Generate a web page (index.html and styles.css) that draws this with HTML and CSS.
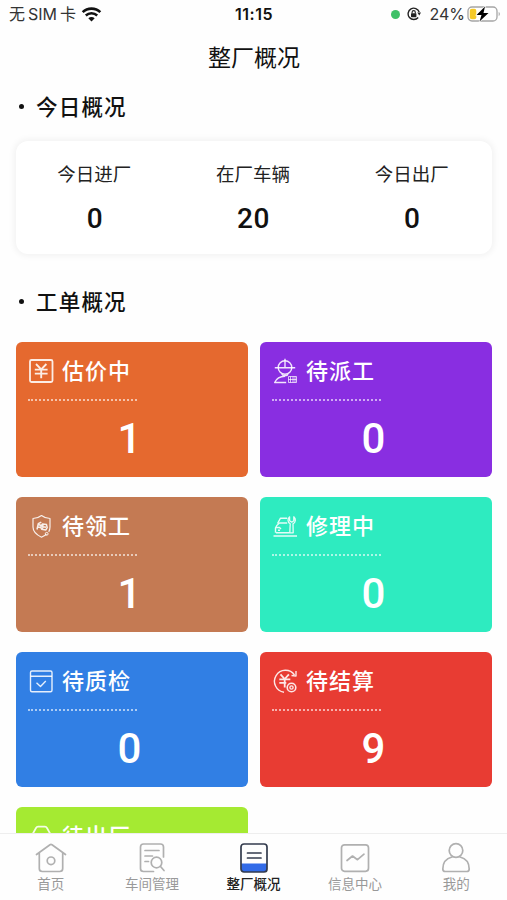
FILE: index.html
```html
<!DOCTYPE html>
<html lang="zh-CN">
<head>
    <meta charset="UTF-8">
    <meta name="viewport" content="width=device-width, initial-scale=1.0">
    <title>整厂概况</title>
    <link rel="stylesheet" href="styles.css">
</head>
<body>
    <!-- Status bar -->
    <header class="status-bar">
        <div class="status-left">
            <span class="carrier">无<span class="sim">SIM</span>卡</span>
            <svg class="wifi" width="21" height="15" viewBox="0 0 20 15">
                <path d="M1.2 5.2C6 .4 14 .4 18.8 5.2" fill="none" stroke="#111" stroke-width="2.6"/>
                <path d="M4.3 8.5c3.2-3 8.200-3 11.400 0" fill="none" stroke="#111" stroke-width="2.5"/>
                <path d="M6.8 11.200c1.800-1.700 4.600-1.700 6.400 0L10 14.500z" fill="#111"/>
            </svg>
        </div>
        <div class="status-time">11:15</div>
        <div class="status-right">
            <span class="green-dot"></span>
            <svg class="lock" width="14" height="14" viewBox="0 0 14 14">
                <path d="M12.200 5A5.700 5.700 0 1 0 11.200 10.500" fill="none" stroke="#222" stroke-width="1.400"/>
                <path d="M10.300 5.500H14l-1.700 3z" fill="#222"/>
                <rect x="4" y="6.200" width="5.400" height="4" rx=".6" fill="#222"/>
                <path d="M5.100 6.500V5.200a1.600 1.600 0 0 1 3.200 0v1.300" fill="none" stroke="#222" stroke-width="1.100"/>
            </svg>
            <span class="percent">24%</span>
            <svg class="battery" width="34" height="18" viewBox="0 0 34 18">
                <rect x="1" y="2" width="29" height="14" rx="4" fill="#fff" stroke="#a5a5a5" stroke-width="1.300"/>
                <path d="M31.700 7v4c1.500-.5 1.500-3.500 0-4z" fill="#a5a5a5"/>
                <rect x="2.800" y="3.800" width="6.500" height="10.400" rx="2" fill="#f5c928"/>
                <path d="M18 1.500L9.500 10h5l-2 6.500L21.500 8h-5z" fill="#000" stroke="#fff" stroke-width="1.200" paint-order="stroke"/>
            </svg>
        </div>
    </header>

    <main class="content">
        <h1 class="page-title">整厂概况</h1>

        <!-- Today -->
        <h2 class="section-title">今日概况</h2>
        <div class="today-card">
            <div class="today-item">
                <div class="today-label">今日进厂</div>
                <div class="today-num">0</div>
            </div>
            <div class="today-item">
                <div class="today-label">在厂车辆</div>
                <div class="today-num">20</div>
            </div>
            <div class="today-item">
                <div class="today-label">今日出厂</div>
                <div class="today-num">0</div>
            </div>
        </div>

        <!-- Work orders -->
        <h2 class="section-title orders-title">工单概况</h2>
        <div class="order-grid">
            <div class="order orange">
                <div class="order-head">
                    <svg class="order-icon" viewBox="0 0 26 26">
                        <rect x="2" y="2" width="22.500" height="22" rx="1.500" stroke-width="1.800"/>
                        <path d="M8 6l5.200 5.300L18.400 6M6.800 11.600h12.800M6.800 15.600h12.800M13.200 11.300v9" stroke-width="1.900"/>
                    </svg>
                    <span>估价中</span>
                </div>
                <div class="order-num">1</div>
            </div>
            <div class="order purple">
                <div class="order-head">
                    <svg class="order-icon" viewBox="0 0 26 26">
                        <circle cx="13" cy="9.500" r="6.800"/>
                        <path d="M13 .8v8.500M2.800 9.800h20.400M13 18.300c-5 .2-8.500 2.200-10.300 6.200h11.500M9.800 16.200c.5 2 5.500 2 6.200 0"/>
                        <path d="M16.500 18.500h8v6h-8zM18.500 18.500v6M21 18.500v6M23 18.500v6M16.500 21.500h8" stroke-width=".8"/>
                    </svg>
                    <span>待派工</span>
                </div>
                <div class="order-num">0</div>
            </div>
            <div class="order brown">
                <div class="order-head">
                    <svg class="order-icon" viewBox="0 0 26 26">
                        <path d="M18.500 21.200c-1.500 1.300-3.400 2.200-5 3C8.500 21.800 5 19 5 14V5.500c3.500 0 6-1 8.500-3 2.500 2 5 3 8.500 3V14c0 2-.4 3.500-1.300 4.800" stroke-width="1.200"/>
                        <circle cx="18.700" cy="20.800" r="1.400" stroke-width="1"/>
                        <path d="M9 16.500l1.300-5.800 3-1.500M10.300 11.500l3 1M10 14l2.500.6M14.500 11l4 .6.700 3-1.500 2.500-4-.8-1-2.300zM14 13.500l4 .8M15 11.500l-.5 4.500" stroke-width="1.500"/>
                    </svg>
                    <span>待领工</span>
                </div>
                <div class="order-num">1</div>
            </div>
            <div class="order green">
                <div class="order-head">
                    <svg class="order-icon" viewBox="0 0 26 26">
                        <path d="M1.500 23h23.500M4 19.800h13.500M15.200 10H7.500q-3.500 2.500-4 5v4.800M5.500 10.500l3-5.300h6.700M4 14.500h3.500l1.500 1.500M6 17.200h2"/>
                        <path d="M17.600 3.800c-2.400 2-2 5.500.6 7l-.4 9h3.400l-.2-9c2.800-1.500 3.200-5 .8-7v4l-2 1.400-2.200-1.400z" stroke-width="1.300"/>
                    </svg>
                    <span>修理中</span>
                </div>
                <div class="order-num">0</div>
            </div>
            <div class="order blue">
                <div class="order-head">
                    <svg class="order-icon" viewBox="0 0 26 26">
                        <rect x="2.500" y="3" width="21.500" height="20.800" rx="1.500"/>
                        <path d="M2.500 8.300H24M8.500 14.800l4 3.700 5.300-5.400"/>
                    </svg>
                    <span>待质检</span>
                </div>
                <div class="order-num">0</div>
            </div>
            <div class="order red">
                <div class="order-head">
                    <svg class="order-icon" viewBox="0 0 26 26">
                        <path d="M22.500 7A11 11 0 1 0 12 24.200M24 3v5l-4.500-.5"/>
                        <path d="M8.500 6.300l4.200 4.700 4.200-4.700M7.300 11.300h11M7.300 14.800h7M12.700 11v8.500" stroke-width="1.800"/>
                        <circle cx="19.500" cy="19.500" r="4.300" stroke-width="1.600"/>
                        <circle cx="19.500" cy="19.500" r="1.600"/>
                    </svg>
                    <span>待结算</span>
                </div>
                <div class="order-num">9</div>
            </div>
            <div class="order lime">
                <div class="order-head">
                    <svg class="order-icon" viewBox="0 0 26 26">
                        <path d="M3 12.500l2.500-3L8 5q.7-1.300 2-1.300h7q1.300 0 2 1.300l2.500 4.500 2.500 3V22H3z" stroke-width="1.700"/>
                    </svg>
                    <span>待出厂</span>
                </div>
            </div>
        </div>
    </main>

    <!-- Bottom tabs -->
    <nav class="tab-bar">
        <a class="tab">
            <svg viewBox="0 0 32 32">
                <path d="M1.500 12.500L15 2.800a1.700 1.700 0 0 1 2 0L30.500 12.500M4.300 11v15.500q0 3 3 3h17.400q3 0 3-3V11"/>
                <circle cx="16" cy="18.800" r="3.800"/>
            </svg>
            <span>首页</span>
        </a>
        <a class="tab">
            <svg viewBox="0 0 32 32">
                <path d="M27.500 15V5q0-3-3-3h-17q-3 0-3 3v21.500q0 3 3 3h10M9 8.500h14M9 14h7.500M9 19.500h3.500"/>
                <circle cx="20.500" cy="20.500" r="5.300"/>
                <path d="M24.500 24.500l3.500 4"/>
            </svg>
            <span>车间管理</span>
        </a>
        <a class="tab active">
            <svg viewBox="0 0 32 32">
                <path class="fill" d="M3 21.500h26v5.500q0 3-3 3H6q-3 0-3-3z"/>
                <rect x="3" y="2" width="26" height="28" rx="3"/>
                <path d="M9.500 11h13.500M9.500 16h13.500"/>
            </svg>
            <span>整厂概况</span>
        </a>
        <a class="tab">
            <svg viewBox="0 0 32 32">
                <rect x="2.500" y="2.800" width="27" height="26.500" rx="3"/>
                <path d="M8 18.500l5.500-4.500 5 3.700 6.500-5.500"/>
            </svg>
            <span>信息中心</span>
        </a>
        <a class="tab">
            <svg viewBox="0 0 32 32">
                <circle cx="16" cy="8.500" r="6.800"/>
                <path d="M12 15C6 16.500 2.800 21 2.800 27q0 2.500 2.500 2.500h21.400q2.500 0 2.500-2.500c0-6-3.200-10.500-9.200-12"/>
            </svg>
            <span>我的</span>
        </a>
    </nav>
</body>
</html>
```

FILE: styles.css
```css
* {
    box-sizing: border-box;
}

body {
    margin: 0;
    height: 900px;
    display: flex;
    flex-direction: column;
    overflow: hidden;
    background: #fefefe;
    color: #111;
    font-family: Roboto, "Noto Sans CJK SC", sans-serif;
}

/* Status bar */
.status-bar {
    flex: none;
    height: 30px;
    padding: 0 6px 2px 9px;
    display: grid;
    grid-template-columns: 1fr auto 1fr;
    align-items: center;
    font-family: Inter, "Noto Sans CJK SC", sans-serif;
    font-size: 16px;
    line-height: 28px;
}

.status-left,
.status-right {
    display: flex;
    align-items: center;
}

.carrier {
    color: #333;
}

.sim {
    margin: 0 3px;
}

.wifi {
    margin-left: 5px;
}

.status-time {
    padding-right: 2px;
    font-weight: 600;
    letter-spacing: 0.5px;
}

.status-right {
    justify-content: flex-end;
}

.green-dot {
    width: 9px;
    height: 9px;
    border-radius: 50%;
    background: #3fc168;
}

.lock {
    margin: 0 8px 0 7px;
}

.percent {
    color: #333;
    margin-right: 2px;
}

/* Content */
.content {
    flex: 1;
    min-height: 0;
    overflow: hidden;
    padding: 0 15px 0 16px;
}

.page-title {
    margin: 0;
    padding-top: 2px;
    height: 54px;
    font-size: 23px;
    font-weight: 400;
    line-height: 54px;
    text-align: center;
}

.section-title {
    display: flex;
    align-items: center;
    margin: 0;
    height: 42px;
    font-size: 21.5px;
    font-weight: 500;
    letter-spacing: 1.2px;
}

.section-title::before {
    content: "";
    width: 5px;
    height: 5px;
    margin: 2px 12px 0 3px;
    border-radius: 50%;
    background: #111;
}

.today-card {
    display: flex;
    height: 113px;
    margin-top: 15px;
    padding-top: 20px;
    border-radius: 12px;
    background: #fff;
    box-shadow: 0 0 6px 2px rgba(0, 0, 0, 0.05);
}

.today-item {
    flex: 1;
    text-align: center;
}

.today-label {
    padding-right: 2px;
    color: #222;
    font-size: 18.5px;
    line-height: 29px;
}

.today-num {
    margin-top: 11px;
    padding-right: 1px;
    font-size: 28px;
    font-weight: 500;
    line-height: 36px;
    letter-spacing: 0.5px;
}

.orders-title {
    margin-top: 25px;
}

.order-grid {
    display: grid;
    grid-template-columns: 1fr 1fr;
    grid-auto-rows: 135px;
    gap: 20px 12px;
    margin-top: 21px;
}

.order {
    padding: 0 12px;
    border-radius: 6px;
    color: #fff;
}

.order-head {
    display: flex;
    align-items: center;
    width: 109px;
    height: 59px;
    font-size: 22px;
    font-weight: 500;
    letter-spacing: 1px;
    white-space: nowrap;
    border-bottom: 2px dotted rgba(255, 255, 255, 0.6);
}

.order-head span {
    padding-bottom: 4px;
}

.order-icon {
    flex: none;
    width: 26px;
    height: 26px;
    margin-right: 8px;
    fill: none;
    stroke: rgba(255, 255, 255, 0.88);
    stroke-width: 1.4;
    stroke-linejoin: round;
}

.order-num {
    padding-right: 5px;
    font-size: 42px;
    font-weight: 500;
    line-height: 76px;
    text-align: center;
}

.orange { background: #e5692f; }
.purple { background: #892ee1; }
.brown { background: #c47a53; }
.green { background: #2eebc0; }
.blue { background: #317fe4; }
.red { background: #e83c33; }
.lime { background: #a5ea32; }

/* Bottom tabs */
.tab-bar {
    flex: none;
    display: flex;
    height: 67px;
    padding-top: 8px;
    border-top: 1px solid #eee;
    background: #fefefe;
}

.tab {
    flex: 1;
    display: flex;
    flex-direction: column;
    align-items: center;
    color: #999;
    font-size: 13.5px;
    line-height: 20px;
}

.tab svg {
    width: 32px;
    height: 32px;
    fill: none;
    stroke: #b0b0b0;
    stroke-width: 1.7;
    stroke-linecap: round;
    stroke-linejoin: round;
}

.tab.active {
    color: #222;
    font-weight: 500;
}

.tab.active svg {
    stroke: #333b4d;
}

.tab.active .fill {
    fill: #326be8;
    stroke: none;
}
```
